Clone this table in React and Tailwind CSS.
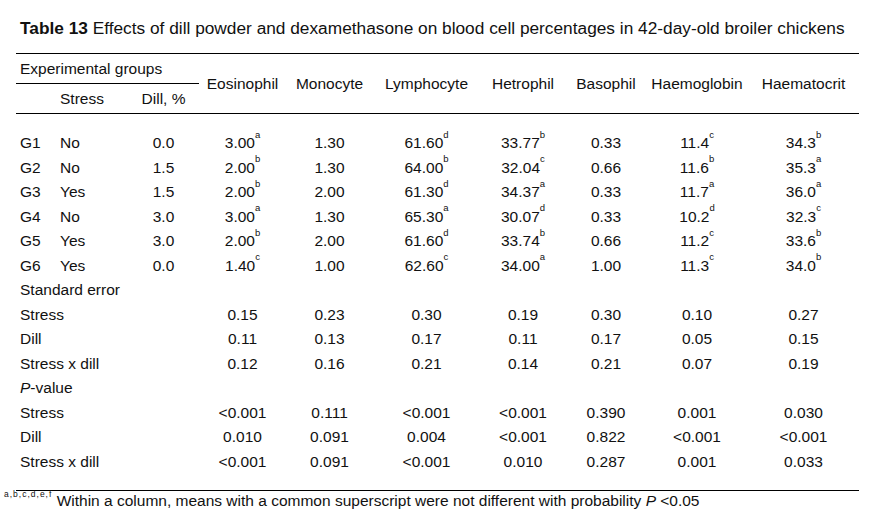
import React from "react";

const cols = [41, 71, 71, 87, 87, 107, 86, 80, 102, 111];
const measures = ["Eosinophil", "Monocyte", "Lymphocyte", "Hetrophil", "Basophil", "Haemoglobin", "Haematocrit"];

const groups = [
  ["G1", "No", "0.0", ["3.00", "a"], ["1.30"], ["61.60", "d"], ["33.77", "b"], ["0.33"], ["11.4", "c"], ["34.3", "b"]],
  ["G2", "No", "1.5", ["2.00", "b"], ["1.30"], ["64.00", "b"], ["32.04", "c"], ["0.66"], ["11.6", "b"], ["35.3", "a"]],
  ["G3", "Yes", "1.5", ["2.00", "b"], ["2.00"], ["61.30", "d"], ["34.37", "a"], ["0.33"], ["11.7", "a"], ["36.0", "a"]],
  ["G4", "No", "3.0", ["3.00", "a"], ["1.30"], ["65.30", "a"], ["30.07", "d"], ["0.33"], ["10.2", "d"], ["32.3", "c"]],
  ["G5", "Yes", "3.0", ["2.00", "b"], ["2.00"], ["61.60", "d"], ["33.74", "b"], ["0.66"], ["11.2", "c"], ["33.6", "b"]],
  ["G6", "Yes", "0.0", ["1.40", "c"], ["1.00"], ["62.60", "c"], ["34.00", "a"], ["1.00"], ["11.3", "c"], ["34.0", "b"]],
];

const se = [
  ["Stress", "0.15", "0.23", "0.30", "0.19", "0.30", "0.10", "0.27"],
  ["Dill", "0.11", "0.13", "0.17", "0.11", "0.17", "0.05", "0.15"],
  ["Stress x dill", "0.12", "0.16", "0.21", "0.14", "0.21", "0.07", "0.19"],
];

const pv = [
  ["Stress", "<0.001", "0.111", "<0.001", "<0.001", "0.390", "0.001", "0.030"],
  ["Dill", "0.010", "0.091", "0.004", "<0.001", "0.822", "<0.001", "<0.001"],
  ["Stress x dill", "<0.001", "0.091", "<0.001", "0.010", "0.287", "0.001", "0.033"],
];

function Val({ v }) {
  return (
    <>
      {v[0]}
      {v[1] ? <sup className="text-[9.5px] align-[6px] leading-none">{v[1]}</sup> : null}
    </>
  );
}

export default function App() {
  return (
    <div className="w-[880px] h-[529px] bg-white text-[#111] font-['Liberation_Sans',Arial,sans-serif] overflow-hidden">
      <div className="pl-[20px] pt-[18px] text-[17.3px] leading-[20px] whitespace-nowrap">
        <b>Table 13</b> Effects of dill powder and dexamethasone on blood cell percentages in 42-day-old broiler chickens
      </div>
      <div className="pl-[16px] mt-[15px]">
        <table className="table-fixed border-separate border-spacing-0 w-[843px] text-[15.5px] leading-[18px]">
          <colgroup>
            {cols.map((w, i) => (
              <col key={i} style={{ width: w }} />
            ))}
          </colgroup>
          <thead>
            <tr className="h-[31px]">
              <td colSpan={3} className="border-t border-b border-black text-left pl-[4px] align-middle">
                Experimental groups
              </td>
              {measures.map((m) => (
                <th key={m} rowSpan={2} className="border-t border-b border-black font-normal text-center align-middle">
                  {m}
                </th>
              ))}
            </tr>
            <tr className="h-[30px]">
              <td className="border-b border-black"></td>
              <td className="border-b border-black pl-[3px] align-middle">Stress</td>
              <td className="border-b border-black text-center align-middle">Dill, %</td>
            </tr>
          </thead>
          <tbody>
            <tr className="h-[17px]">
              <td colSpan={10}></td>
            </tr>
            {groups.map((g) => (
              <tr key={g[0]} className="h-[24.5px]">
                <td className="pl-[4px]">{g[0]}</td>
                <td className="pl-[3px]">{g[1]}</td>
                <td className="text-center">{g[2]}</td>
                {g.slice(3).map((v, i) => (
                  <td key={i} className="text-center">
                    <Val v={v} />
                  </td>
                ))}
              </tr>
            ))}
            <tr className="h-[24.5px]">
              <td colSpan={10} className="pl-[4px]">Standard error</td>
            </tr>
            {se.map((r, k) => (
              <tr key={"se" + k} className="h-[24.5px]">
                <td colSpan={3} className="pl-[4px]">{r[0]}</td>
                {r.slice(1).map((v, i) => (
                  <td key={i} className="text-center">{v}</td>
                ))}
              </tr>
            ))}
            <tr className="h-[24.5px]">
              <td colSpan={10} className="pl-[4px]">
                <i>P</i>-value
              </td>
            </tr>
            {pv.map((r, k) => (
              <tr key={"pv" + k} className="h-[24.5px]">
                <td colSpan={3} className="pl-[4px]">{r[0]}</td>
                {r.slice(1).map((v, i) => (
                  <td key={i} className="text-center">{v}</td>
                ))}
              </tr>
            ))}
            <tr className="h-[17px]">
              <td colSpan={10} className="border-b border-black"></td>
            </tr>
          </tbody>
        </table>
      </div>
      <div className="pl-[4px] text-[15.5px] leading-[18px] mt-[1px] whitespace-nowrap">
        <sup className="text-[8.5px] tracking-[1px] align-[5px] leading-none">a,b,c,d,e,f</sup> Within a column, means with a common superscript were not different with probability <i>P</i> &lt;0.05
      </div>
    </div>
  );
}
